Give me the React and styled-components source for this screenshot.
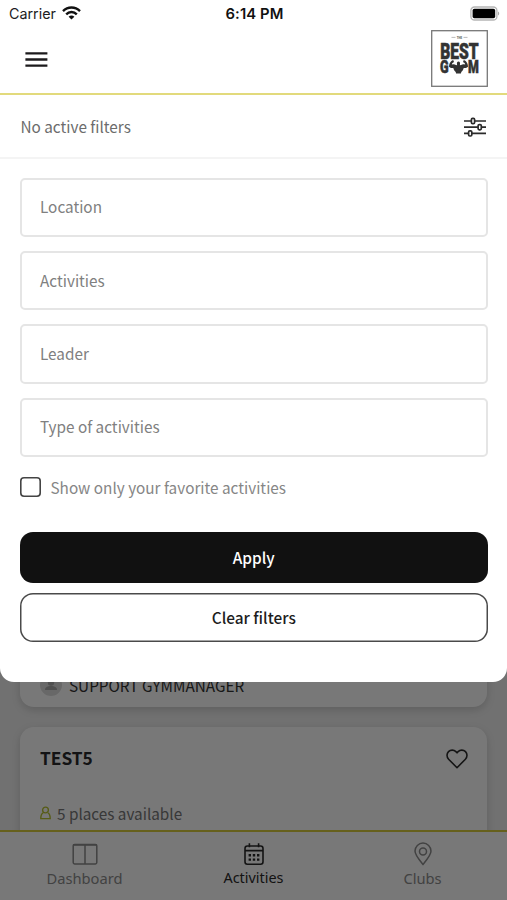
import React from 'react';
import styled, { createGlobalStyle } from 'styled-components';

const GlobalStyle = createGlobalStyle`
  * {
    box-sizing: border-box;
  }
  body {
    margin: 0;
    background: #fff;
  }
`;

const Screen = styled.div`
  position: relative;
  display: flex;
  flex-direction: column;
  width: 507px;
  height: 900px;
  overflow: hidden;
  background: #f0f0f0;
  color: #2a2a2c;
  font-family: 'Noto Sans CJK SC', 'Noto Sans', sans-serif;
  font-size: 15.3px;
  line-height: 24px;
`;

const List = styled.div`
  flex: 1;
  min-height: 0;
  display: flex;
  flex-direction: column;
  gap: 20px;
  padding: 100px 20px 0;
  overflow: hidden;
`;

const Card = styled.div`
  flex: none;
  display: flex;
  flex-direction: column;
  justify-content: ${({ $end }) => ($end ? 'flex-end' : 'flex-start')};
  height: ${({ $height }) => $height}px;
  padding: ${({ $end }) => ($end ? '20px 20px 10px' : '19px 19px 0 20px')};
  border-radius: 14px;
  background: #fff;
  box-shadow: 0 3px 9px rgba(0, 0, 0, 0.16);
`;

const Trainer = styled.div`
  display: flex;
  align-items: center;
  gap: 7px;
  color: #333;
`;

const CardTop = styled.div`
  display: flex;
  align-items: center;
  justify-content: space-between;
  height: 24px;
  margin-bottom: 31px;
  font-size: 17.3px;
  font-weight: 700;
  svg {
    margin-top: 2px;
  }
`;

const Places = styled.div`
  display: flex;
  align-items: center;
  gap: 6px;
  color: #777;
`;

const TabBar = styled.nav`
  flex: none;
  display: grid;
  grid-template-columns: repeat(3, 1fr);
  height: 70px;
  border-top: 2px solid #d9cc3c;
  background: #fff;
`;

const Tab = styled.div`
  display: flex;
  flex-direction: column;
  align-items: center;
  padding-top: 10px;
  color: ${({ $active }) => ($active ? '#2a2a2a' : '#8c8c8c')};
  font-family: 'Noto Sans', sans-serif;
  font-size: ${({ $active }) => ($active ? 14.4 : 14.7)}px;
  line-height: 20px;
  svg {
    margin-bottom: 2px;
  }
`;

const Backdrop = styled.div`
  position: absolute;
  inset: 0;
  background: rgba(0, 0, 0, 0.53);
`;

const Sheet = styled.div`
  position: absolute;
  top: 0;
  left: 0;
  right: 0;
  height: 681.5px;
  border-radius: 0 0 14px 14px;
  background: #fff;
`;

const StatusBar = styled.div`
  display: grid;
  grid-template-columns: 1fr auto 1fr;
  align-items: center;
  height: 27px;
  padding: 0 7px 0 9px;
  color: #1c1c1e;
  font-family: Inter, sans-serif;
  font-size: 14.3px;
`;

const Carrier = styled.div`
  display: flex;
  align-items: center;
  gap: 6px;
  svg {
    margin-top: -2px;
  }
`;

const Time = styled.div`
  color: #111;
  font-size: 14.8px;
  font-weight: 600;
  letter-spacing: 0.1px;
`;

const BatteryBox = styled.div`
  display: flex;
  justify-content: flex-end;
`;

const Header = styled.header`
  display: flex;
  align-items: flex-start;
  justify-content: space-between;
  height: 68px;
  padding: 3px 19px 0 25px;
  border-bottom: 2px solid #e2da7c;
  > svg:first-child {
    margin-top: 21px;
  }
`;

const FilterBar = styled.div`
  display: flex;
  align-items: center;
  justify-content: space-between;
  height: 64px;
  padding: 0 20px 0 20.5px;
  border-bottom: 2px solid #f4f4f4;
  color: #6c6c6c;
  svg {
    margin-top: 2px;
  }
`;

const Form = styled.div`
  display: flex;
  flex-direction: column;
  padding: 18.5px 19.5px 0 20px;
`;

const Field = styled.div`
  display: flex;
  align-items: center;
  height: 59.5px;
  margin-bottom: 13.9px;
  padding: 0 18px 2px;
  border: 2px solid #e5e5e5;
  border-radius: 5px;
  color: #808080;
`;

const CheckRow = styled.label`
  display: flex;
  align-items: center;
  gap: 10px;
  height: 24px;
  margin: 4px 0 33px;
  color: #868686;
`;

const Box = styled.span`
  width: 20.5px;
  height: 20.5px;
  border-radius: 4px;
  box-shadow: inset 0 0 0 1.6px #444;
`;

const Button = styled.button`
  height: ${({ $primary }) => ($primary ? 51 : 49)}px;
  margin: 0 0 10px;
  padding: 0 0 1px;
  border: none;
  border-radius: 13px;
  background: ${({ $primary }) => ($primary ? '#111' : '#fff')};
  box-shadow: ${({ $primary }) => ($primary ? 'none' : 'inset 0 0 0 1.5px #4a4a4a')};
  color: ${({ $primary }) => ($primary ? '#fff' : '#1c1c1c')};
  font-family: inherit;
  font-size: 15.4px;
  font-weight: 500;
`;

const WifiIcon = () => (
  <svg width="19" height="14" viewBox="0 0 19 14">
    <g fill="none" stroke="#111" strokeWidth="2.4">
      <path d="M1 5.1C5.8.3 13.2.3 18 5.1" />
      <path d="M4.2 8.3c3-3 7.6-3 10.6 0" />
    </g>
    <path d="M6.6 10.7c1.7-1.5 4.1-1.5 5.8 0L9.5 13.6z" fill="#111" />
  </svg>
);

const BatteryIcon = () => (
  <svg width="30" height="15" viewBox="0 0 30 15">
    <rect x="0.9" y="1" width="26" height="13" rx="3.6" fill="#fff" stroke="#b5b5b5" strokeWidth="1.3" />
    <rect x="2.6" y="2.7" width="22.6" height="9.6" rx="1.8" fill="#000" />
    <path d="M28 5.4c1.6.7 1.6 3.5 0 4.2z" fill="#aaa" />
  </svg>
);

const MenuIcon = () => (
  <svg width="23" height="17" viewBox="0 0 23 17" stroke="#1c1a1c" strokeWidth="2.4">
    <path d="M.4 2.4h22M.4 8.5h22M.4 14.6h22" />
  </svg>
);

const Logo = () => (
  <svg width="57" height="57" viewBox="0 0 57 57" fontFamily="Roboto, sans-serif" fontWeight="900" fill="#333">
    <rect x="0.7" y="0.7" width="55.6" height="55.6" fill="#fff" stroke="#777" strokeWidth="1.3" />
    <path d="M20.5 7.4h4M32.5 7.4h4" stroke="#aaa" strokeWidth="0.8" />
    <text x="25.8" y="8.8" fontSize="4" textLength="5.4" lengthAdjust="spacingAndGlyphs" fill="#666">THE</text>
    <g stroke="#333" strokeWidth="0.6">
      <text x="9.2" y="28.6" fontSize="21.5" textLength="38.4" lengthAdjust="spacingAndGlyphs">BEST</text>
      <text x="9" y="43.2" fontSize="17.5" textLength="8.6" lengthAdjust="spacingAndGlyphs">G</text>
      <text x="37" y="43.2" fontSize="17.5" textLength="10.8" lengthAdjust="spacingAndGlyphs">M</text>
    </g>
    <path d="M21.3 30.3l1.7.5-.5 1.8-1.2.4-.5 1.7c1.5-.7 3-.3 4.1.3l1.2.2c-.5-2.6.2-3.7 1.4-3.7s1.9 1.1 1.4 3.7l1.2-.2c1.1-.6 2.6-1 4.1-.3l-.5-1.7-1.2-.4-.5-1.8 1.7-.5c2 1.2 3.4 3.7 3.3 6.5-1.2 1.3-2.8 1.5-4.3 1.2-.4 2-1.5 3.2-2.4 3.9l-.4 1.5h-4.8l-.4-1.5c-.9-.7-2-1.9-2.4-3.9-1.5.3-3.1.1-4.3-1.2-.1-2.8 1.3-5.3 3.3-6.5z" />
  </svg>
);

const SlidersIcon = () => (
  <svg width="23" height="20" viewBox="0 0 23 20" fill="#fff" stroke="#2b2b2b" strokeWidth="1.7">
    <path d="M0 4h22M0 10.2h22M0 16.4h22" />
    <rect x="7.4" y="1.4" width="3.2" height="5.2" rx="1.2" />
    <rect x="14.1" y="7.6" width="3.2" height="5.2" rx="1.2" />
    <rect x="4.6" y="13.8" width="3.2" height="5.2" rx="1.2" />
  </svg>
);

const AvatarIcon = () => (
  <svg width="22" height="22" viewBox="0 0 22 22">
    <circle cx="11" cy="11" r="11" fill="#dedede" />
    <circle cx="11" cy="8.5" r="3.2" fill="#aaa" />
    <path d="M5 16c0-3 2.6-4 6-4s6 1 6 4z" fill="#aaa" />
  </svg>
);

const HeartIcon = () => (
  <svg width="22" height="20" viewBox="0 0 22 20" fill="none" stroke="#2c2c2c" strokeWidth="1.6" strokeLinejoin="round">
    <path d="M11 18.7L2.6 10.2C.5 8 .5 4.6 2.5 2.6s5.4-2 7.4 0L11 3.8l1.1-1.2c2-2 5.4-2 7.4 0s2 5.4-.1 7.6z" />
  </svg>
);

const PersonIcon = () => (
  <svg width="11" height="14" viewBox="0 0 11 14" fill="none" stroke="#b9c331" strokeWidth="1.4">
    <circle cx="5.5" cy="4" r="2.9" />
    <path d="M3.2 6.8C1.6 7.4.8 8.7.8 12.6h9.4c0-3.9-.8-5.2-2.4-5.8" />
  </svg>
);

const DashboardIcon = () => (
  <svg width="26" height="24" viewBox="0 0 26 24" fill="none" stroke="currentColor" strokeWidth="1.5">
    <rect x="1.2" y="2.4" width="23.6" height="19.6" rx="1.4" />
    <path d="M1.2 3h23.6M13 2.4V22" />
  </svg>
);

const CalendarIcon = () => (
  <svg width="22" height="24" viewBox="0 0 22 24" fill="none" stroke="currentColor" strokeWidth="1.6">
    <rect x="2" y="4" width="18" height="18.2" rx="2.4" />
    <path d="M2 8.6h18M6.4 1.2v4M15.6 1.2v4" />
    <path d="M5.6 13.2h10.8M5.6 17.6h10.8" strokeWidth="2.4" strokeDasharray="2.4 1.8" />
  </svg>
);

const PinIcon = () => (
  <svg width="20" height="24" viewBox="0 0 20 24" fill="none" stroke="currentColor" strokeWidth="1.5">
    <path d="M10 22.4C6 17.6 2 13.2 2 9.1a8 8 0 0 1 16 0c0 4.1-4 8.5-8 13.3z" />
    <circle cx="10" cy="9.4" r="3.5" />
  </svg>
);

const fields = ['Location', 'Activities', 'Leader', 'Type of activities'];

export default function App() {
  return (
    <>
      <GlobalStyle />
      <Screen>
        <List>
          <Card $height={607} $end>
            <Trainer>
              <AvatarIcon />
              <span>SUPPORT GYMMANAGER</span>
            </Trainer>
          </Card>
          <Card $height={160}>
            <CardTop>
              <span>TEST5</span>
              <HeartIcon />
            </CardTop>
            <Places>
              <PersonIcon />
              <span>5 places available</span>
            </Places>
          </Card>
        </List>
        <TabBar>
          <Tab>
            <DashboardIcon />
            Dashboard
          </Tab>
          <Tab $active>
            <CalendarIcon />
            Activities
          </Tab>
          <Tab>
            <PinIcon />
            Clubs
          </Tab>
        </TabBar>
        <Backdrop />
        <Sheet>
          <StatusBar>
            <Carrier>
              Carrier
              <WifiIcon />
            </Carrier>
            <Time>6:14 PM</Time>
            <BatteryBox>
              <BatteryIcon />
            </BatteryBox>
          </StatusBar>
          <Header>
            <MenuIcon />
            <Logo />
          </Header>
          <FilterBar>
            <span>No active filters</span>
            <SlidersIcon />
          </FilterBar>
          <Form>
            {fields.map((name) => (
              <Field key={name}>{name}</Field>
            ))}
            <CheckRow>
              <Box />
              Show only your favorite activities
            </CheckRow>
            <Button $primary>Apply</Button>
            <Button>Clear filters</Button>
          </Form>
        </Sheet>
      </Screen>
    </>
  );
}
